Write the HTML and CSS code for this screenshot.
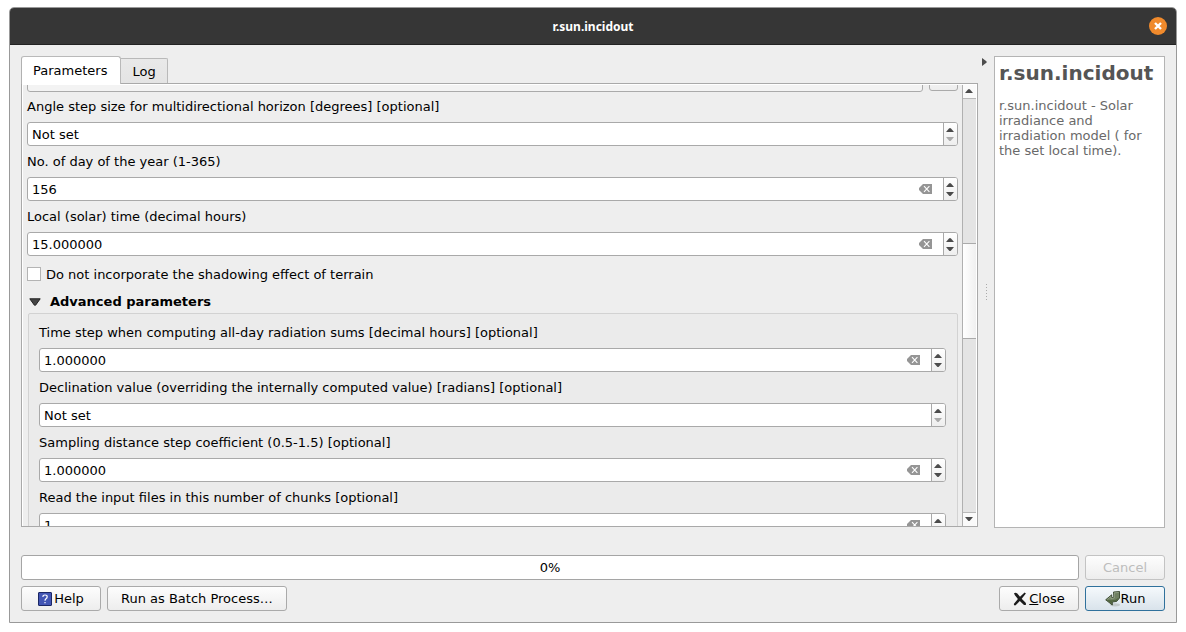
FILE: index.html
```html
<!DOCTYPE html>
<html lang="en">
<head>
<meta charset="utf-8">
<title>r.sun.incidout</title>
<link rel="stylesheet" href="styles.css">
</head>
<body>
<svg class="defs" aria-hidden="true">
  <symbol id="up" viewBox="0 0 8 4"><path d="M0 4L3 0.6Q4 -0.4 5 0.6L8 4Z" fill="currentColor"/></symbol>
  <symbol id="down" viewBox="0 0 8 4"><path d="M0 0L3 3.4Q4 4.4 5 3.4L8 0Z" fill="currentColor"/></symbol>
  <symbol id="clear" viewBox="0 0 13 10"><path d="M4 0H13V10H4L0 6V4Z" fill="#959595"/><path d="M5 2.2L10.4 7.8M10.4 2.2L5 7.8" stroke="#fff" stroke-width="1.1" fill="none"/></symbol>
</svg>
<div class="window">
  <header class="titlebar">
    <h1 class="title">r.sun.incidout</h1>
    <button class="window-close" aria-label="Close window"><svg width="8" height="8" viewBox="0 0 8 8"><path d="M1 1L7 7M7 1L1 7" stroke="#fff" stroke-width="2.4"/></svg></button>
  </header>
  <main class="content">
    <div class="split">
      <section class="params">
        <div class="tabs" role="tablist">
          <button class="tab active" role="tab" aria-selected="true">Parameters</button>
          <button class="tab" role="tab" aria-selected="false">Log</button>
        </div>
        <div class="pane">
          <div class="viewport">
            <div class="form">
              <div class="layer-row">
                <input class="layer-path" type="text" aria-label="Input layer">
                <button class="btn browse" aria-label="Browse"></button>
              </div>
              <label class="label" for="step">Angle step size for multidirectional horizon [degrees] [optional]</label>
              <div class="spin"><input id="step" type="text" value="Not set"><span class="arrows"><button aria-label="Increase"><svg class="arrow"><use href="#up"/></svg></button><button aria-label="Decrease" disabled><svg class="arrow"><use href="#down"/></svg></button></span></div>
              <label class="label" for="day">No. of day of the year (1-365)</label>
              <div class="spin"><input id="day" type="text" value="156"><button class="clear" aria-label="Clear"><svg><use href="#clear"/></svg></button><span class="arrows"><button aria-label="Increase"><svg class="arrow"><use href="#up"/></svg></button><button aria-label="Decrease"><svg class="arrow"><use href="#down"/></svg></button></span></div>
              <label class="label" for="time">Local (solar) time (decimal hours)</label>
              <div class="spin"><input id="time" type="text" value="15.000000"><button class="clear" aria-label="Clear"><svg><use href="#clear"/></svg></button><span class="arrows"><button aria-label="Increase"><svg class="arrow"><use href="#up"/></svg></button><button aria-label="Decrease"><svg class="arrow"><use href="#down"/></svg></button></span></div>
              <div class="check-row"><input class="check" id="shadow" type="checkbox"><label for="shadow">Do not incorporate the shadowing effect of terrain</label></div>
              <button class="disclosure" aria-expanded="true"><svg width="12" height="8" viewBox="0 0 12 8"><path d="M0.8 0.8H11.2L6.6 7.2H5.4Z" fill="#454545" stroke="#222" stroke-width="1"/></svg>Advanced parameters</button>
              <div class="group">
                <label class="label" for="tstep">Time step when computing all-day radiation sums [decimal hours] [optional]</label>
                <div class="spin"><input id="tstep" type="text" value="1.000000"><button class="clear" aria-label="Clear"><svg><use href="#clear"/></svg></button><span class="arrows"><button aria-label="Increase"><svg class="arrow"><use href="#up"/></svg></button><button aria-label="Decrease"><svg class="arrow"><use href="#down"/></svg></button></span></div>
                <label class="label" for="decl">Declination value (overriding the internally computed value) [radians] [optional]</label>
                <div class="spin"><input id="decl" type="text" value="Not set"><span class="arrows"><button aria-label="Increase"><svg class="arrow"><use href="#up"/></svg></button><button aria-label="Decrease" disabled><svg class="arrow"><use href="#down"/></svg></button></span></div>
                <label class="label" for="dist">Sampling distance step coefficient (0.5-1.5) [optional]</label>
                <div class="spin"><input id="dist" type="text" value="1.000000"><button class="clear" aria-label="Clear"><svg><use href="#clear"/></svg></button><span class="arrows"><button aria-label="Increase"><svg class="arrow"><use href="#up"/></svg></button><button aria-label="Decrease"><svg class="arrow"><use href="#down"/></svg></button></span></div>
                <label class="label" for="chunks">Read the input files in this number of chunks [optional]</label>
                <div class="spin"><input id="chunks" type="text" value="1"><button class="clear" aria-label="Clear"><svg><use href="#clear"/></svg></button><span class="arrows"><button aria-label="Increase"><svg class="arrow"><use href="#up"/></svg></button><button aria-label="Decrease"><svg class="arrow"><use href="#down"/></svg></button></span></div>
              </div>
            </div>
          </div>
          <div class="scrollbar">
            <button class="scroll-btn" aria-label="Scroll up"><svg class="arrow"><use href="#up"/></svg></button>
            <div class="track-before"></div>
            <div class="thumb"></div>
            <div class="track-after"></div>
            <button class="scroll-btn" aria-label="Scroll down"><svg class="arrow"><use href="#down"/></svg></button>
          </div>
        </div>
      </section>
      <div class="splitter">
        <button class="collapse" aria-label="Collapse help"><svg width="5" height="8" viewBox="0 0 5 8"><path d="M0 0L4.4 3.3Q5 4 4.4 4.7L0 8Z" fill="#4d4d4d"/></svg></button>
        <span class="grip"></span>
      </div>
      <aside class="help">
        <h2 class="help-title">r.sun.incidout</h2>
        <p class="help-text">r.sun.incidout - Solar irradiance and irradiation model ( for the set local time).</p>
      </aside>
    </div>
    <div class="row progress-row">
      <div class="progress" role="progressbar" aria-valuenow="0" aria-valuemin="0" aria-valuemax="100">0%</div>
      <button class="btn" disabled>Cancel</button>
    </div>
    <div class="row">
      <button class="btn"><svg width="14" height="14" viewBox="0 0 14 14"><rect x="0.5" y="0.5" width="13" height="13" rx="0.5" fill="#4255b4" stroke="#1b2765"/><path d="M4.8 4.9Q4.9 3 7 3Q9.2 3 9.2 4.8Q9.2 6 8 6.8Q7 7.5 7 8.8M7 10V11.3" fill="none" stroke="#fff" stroke-width="1.2"/></svg>Help</button>
      <button class="btn batch">Run as Batch Process…</button>
      <span class="spacer"></span>
      <button class="btn"><svg width="14" height="14" viewBox="0 0 14 14"><path d="M1 1.2Q2.6 0.2 4.3 1.5L7 4.8L11.6 0.6L12.9 1.5L8.7 6.8L12.9 11L12.9 13.1L11 13.1L6.8 9.1L2.6 13.3Q0.7 13.8 0.8 11.9L4.9 7.1L1.9 3.2Z" fill="#1c1c1c"/></svg><span><u>C</u>lose</span></button>
      <button class="btn default"><svg width="16" height="16" viewBox="0 0 16 16"><ellipse cx="10" cy="13.8" rx="5" ry="1.6" fill="#a9b0ad" opacity="0.55"/><path d="M8.5 1L14.5 0.5V7L11.7 10.4L7.3 11V14L0.7 8.8L6.7 3.8V6.6L8.8 6.3Z" fill="#6f8062" stroke="#34442b" stroke-width="0.9" stroke-linejoin="round"/><path d="M1.5 9L7 9.3L10.5 8.7L14 6.5L11.5 10L7 10.6V13Z" fill="#50643f"/><path d="M9.3 1.8L13.8 1.4M2.3 8.4L5.9 5.5V7.5L9.3 7V1.8" fill="none" stroke="#a5b298" stroke-width="0.6"/></svg>Run</button>
    </div>
  </main>
</div>
</body>
</html>
```

FILE: styles.css
```css
* { box-sizing: border-box; }
body {
  margin: 0;
  padding: 7px 9px 9px;
  height: 100vh;
  background: #fff;
  color: #000;
  font: 13px/19px "DejaVu Sans", sans-serif;
}
button, input { font: inherit; color: inherit; margin: 0; }
button { padding: 0; border: 0; background: none; }
svg { display: block; flex: none; }
.defs { position: absolute; width: 0; height: 0; }

.window {
  display: flex;
  flex-direction: column;
  height: 100%;
  border: 1px solid #999;
  border-radius: 5px 5px 0 0;
  background: #eee;
  overflow: hidden;
}
.titlebar {
  display: grid;
  grid-template-columns: 18px 1fr 18px;
  align-items: center;
  height: 37px;
  flex: none;
  padding: 0 9px;
  background: #363636;
  border-bottom: 1px solid #222;
}
.title {
  grid-column: 2;
  margin: 0;
  padding-top: 2px;
  text-align: center;
  color: #fff;
  font: bold 12px/18px "Noto Sans", sans-serif;
}
.window-close {
  display: grid;
  place-items: center;
  width: 18px;
  height: 18px;
  border-radius: 50%;
  background: #f08a2c;
}

.content {
  display: flex;
  flex-direction: column;
  flex: 1;
  min-height: 0;
  padding: 11px;
}
.split {
  display: grid;
  grid-template-columns: minmax(0, 1fr) 16px 171px;
  grid-template-rows: minmax(0, 1fr);
  flex: 1;
  min-height: 0;
  margin-bottom: 27px;
}
.params { display: flex; flex-direction: column; min-height: 0; padding-bottom: 1px; }
.tabs { display: flex; align-items: flex-end; flex: none; }
.tab {
  height: 25px;
  padding: 0 11px;
  border: 1px solid #b9b9b9;
  border-left: 0;
  border-bottom: 0;
  border-radius: 0 2px 0 0;
  background: linear-gradient(#e9e9e9, #e4e4e4);
}
.tab.active {
  position: relative;
  height: 28px;
  margin-bottom: -1px;
  padding: 0 13px 1px 11px;
  border-left: 1px solid #b1b1b1;
  border-radius: 3px 3px 0 0;
  background: #fff;
}
.pane {
  display: flex;
  flex: 1;
  min-height: 0;
  border: 1px solid #a9a9a9;
  padding: 1px 1px 0;
  background: #fff;
}
.viewport { flex: 1; overflow: hidden; background: #eee; }
.form {
  display: flex;
  flex-direction: column;
  gap: 6px;
  margin-top: -18px;
  padding: 0 4px;
}
.layer-row { display: flex; align-items: flex-start; gap: 6px; height: 24px; }
.layer-path {
  flex: 1;
  height: 25px;
  border: 1px solid #aaa;
  border-radius: 3px;
  background: #f3f3f3;
}
.btn.browse { width: 29px; height: 24px; }
.label { align-self: flex-start; }
.spin {
  display: flex;
  align-items: center;
  height: 24px;
  flex: none;
  border: 1px solid #a9a9a9;
  border-radius: 3px;
  background: #fff;
  overflow: hidden;
}
.spin input {
  flex: 1;
  min-width: 0;
  height: 22px;
  padding: 0 4px;
  border: 0;
  outline: 0;
  background: transparent;
}
.clear { margin-right: 11px; }
.clear svg { width: 13px; height: 10px; }
.arrows {
  display: grid;
  grid-template-rows: 9px 9px;
  align-content: center;
  width: 14px;
  height: 22px;
  padding-right: 1px;
  border-left: 1px solid #a9a9a9;
  background: linear-gradient(#fff, #eee);
}
.arrows button { display: grid; place-items: center; color: #4b4b4b; }
.arrows button:disabled { color: #aaa; }
.arrow { width: 8px; height: 4px; }
.check-row { display: flex; align-items: center; gap: 5px; height: 24px; }
.check {
  appearance: none;
  width: 14px;
  height: 14px;
  border: 1px solid #b4b4b4;
  background: #fff;
}
.disclosure {
  display: flex;
  align-items: center;
  align-self: flex-start;
  gap: 9px;
  padding-left: 2px;
  font-weight: bold;
}
.group {
  display: flex;
  flex-direction: column;
  gap: 6px;
  margin: -4px 0 0 1px;
  padding: 9px 11px 9px 10px;
  border: 1px solid #d2d2d2;
  border-radius: 2px;
  background: #ebebeb;
}
.scrollbar {
  display: flex;
  flex-direction: column;
  width: 14px;
  border-left: 1px solid #b0b0b0;
  background: #e4e4e4;
}
.scroll-btn {
  display: grid;
  place-items: center;
  height: 14px;
  flex: none;
  padding: 0 1px 1px 0;
  color: #4b4b4b;
  background: #fafafa;
  border-bottom: 1px solid #b9b9b9;
}
.scroll-btn:last-child { border-bottom: 0; border-top: 1px solid #b9b9b9; }
.track-before { flex: 145; }
.thumb {
  flex: 94;
  border: solid #aaa;
  border-width: 1px 0;
  background: linear-gradient(90deg, #fff, #f0f0f0);
}
.track-after { flex: 174; }

.splitter {
  display: grid;
  grid-template-rows: 12px 1fr 12px;
  place-items: center;
}
.collapse { justify-self: start; padding-left: 4px; }
.grip {
  width: 1px;
  height: 17px;
  background: repeating-linear-gradient(#aaa 0 1px, transparent 1px 3px);
}
.help { padding: 4px; border: 1px solid #b4b4b4; background: #fff; }
.help-title { margin: 0 0 13px; font-size: 20px; line-height: 24px; color: #555; }
.help-text { margin: 0; line-height: 15px; color: #696969; }

.row { display: flex; gap: 6px; flex: none; }
.progress-row { margin-bottom: 6px; }
.progress {
  flex: 1;
  height: 25px;
  border: 1px solid #a5a5a5;
  border-radius: 3px;
  background: #fff;
  line-height: 23px;
  text-align: center;
}
.btn {
  display: flex;
  align-items: center;
  justify-content: center;
  gap: 2px;
  width: 80px;
  height: 25px;
  border: 1px solid #aaa;
  border-radius: 3px;
  background: linear-gradient(#fdfdfd, #ededed);
}
.btn:disabled { color: #bdbdbd; border-color: #c3c3c3; }
.btn.batch { width: auto; padding: 0 13px; }
.btn.default {
  gap: 0;
  border-color: #30719c;
  background: linear-gradient(#f5f9fc, #d9e3eb);
}
.spacer { flex: 1; }
```
